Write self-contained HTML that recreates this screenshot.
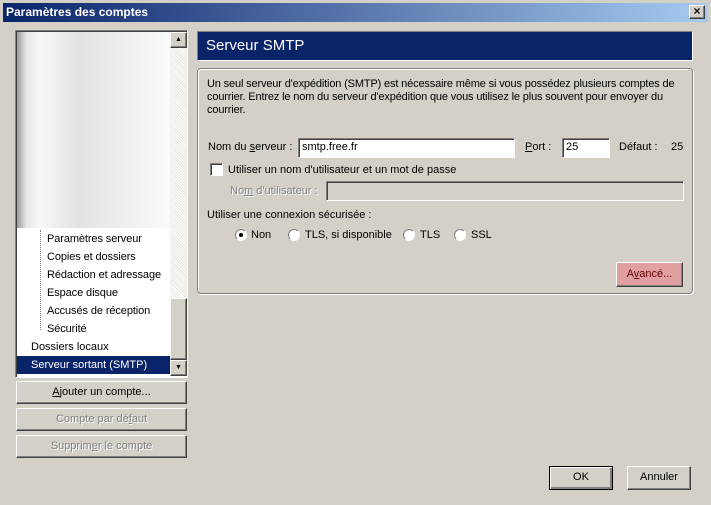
<!DOCTYPE html>
<html><head><meta charset="utf-8"><style>
*{box-sizing:border-box;margin:0;padding:0}
body{width:711px;height:505px;background:#d4d0c8;font-family:"Liberation Sans",sans-serif;font-size:11px;color:#000;position:relative;overflow:hidden}
.a{position:absolute;white-space:nowrap}
.btn{position:absolute;background:#d4d0c8;border:1px solid;border-color:#fff #404040 #404040 #fff;box-shadow:inset -1px -1px 0 #808080;text-align:center}
.inp{position:absolute;background:#fff;border:1px solid;border-color:#808080 #fff #fff #808080;box-shadow:inset 1px 1px 0 #404040;padding:2px 3px}
.dis{color:#808080;text-shadow:1px 1px 0 #fff}
.radio{position:absolute;width:12px;height:12px;border-radius:50%;background:#fff;border:1px solid;border-color:#808080 #fff #fff #808080}
.tree{position:absolute;left:47px;color:#000;letter-spacing:-0.1px}
</style></head><body>
<div class="a" style="left:3px;top:3px;width:705px;height:19px;background:linear-gradient(90deg,#0a246a,#a6caf0)"></div>
<div class="a" style="left:6px;top:5px;color:#fff;font-weight:bold;font-size:12px">Paramètres des comptes</div>
<div class="btn" style="left:689px;top:5px;width:16px;height:14px;font-size:12px;line-height:11px;font-weight:bold">×</div>

<div class="a" style="left:15px;top:30px;width:173px;height:348px;background:#fff;border:1px solid;border-color:#808080 #fff #fff #808080;box-shadow:inset 1px 1px 0 #404040"></div>
<div class="a" style="left:17px;top:32px;width:153px;height:196px;background:linear-gradient(90deg,#999 0,#e6e6e6 6%,#f8f8f8 15%,#e2e2e2 40%,#efefef 70%,#fafafa 100%)"></div>
<div class="a" style="left:170px;top:32px;width:17px;height:344px;background:repeating-linear-gradient(45deg,#e8e6e2 0 1px,#fff 1px 2px)"></div>
<div class="btn" style="left:170px;top:32px;width:17px;height:16px;font-size:7px;line-height:13px">▲</div>
<div class="btn" style="left:170px;top:298px;width:17px;height:62px"></div>
<div class="btn" style="left:170px;top:360px;width:17px;height:16px;font-size:7px;line-height:13px">▼</div>
<div class="a" style="left:40px;top:230px;height:100px;border-left:1px dotted #808080"></div>
<div class="tree a" style="top:233px">Paramètres serveur</div>
<div class="tree a" style="top:251px">Copies et dossiers</div>
<div class="tree a" style="top:269px">Rédaction et adressage</div>
<div class="tree a" style="top:287px">Espace disque</div>
<div class="tree a" style="top:305px">Accusés de réception</div>
<div class="tree a" style="top:323px">Sécurité</div>
<div class="a" style="left:31px;top:341px">Dossiers locaux</div>
<div class="a" style="left:17px;top:356px;width:153px;height:18px;background:#0a246a;color:#fff;padding:3px 0 0 14px">Serveur sortant (SMTP)</div>

<div class="btn" style="left:16px;top:381px;width:171px;height:23px;line-height:20px"><u>A</u>jouter un compte...</div>
<div class="btn dis" style="left:16px;top:408px;width:171px;height:23px;line-height:20px">Compte par dé<u>f</u>aut</div>
<div class="btn dis" style="left:16px;top:435px;width:171px;height:23px;line-height:20px">Supprim<u>e</u>r le compte</div>

<div class="a" style="left:197px;top:31px;width:496px;height:30px;background:#0a246a;border:1px solid;border-color:#808080 #fff #fff #808080;color:#fff;font-size:15px;padding:5px 0 0 8px">Serveur SMTP</div>
<div class="a" style="left:197px;top:68px;width:496px;height:226px;border:1px solid #808080;border-radius:4px;box-shadow:1px 1px 0 #fff,inset 1px 1px 0 #fff"></div>
<div class="a" style="left:207px;top:78px;line-height:13px;white-space:normal;width:484px;letter-spacing:-0.15px">Un seul serveur d'expédition (SMTP) est nécessaire même si vous possédez plusieurs comptes de courrier. Entrez le nom du serveur d'expédition que vous utilisez le plus souvent pour envoyer du courrier.</div>

<div class="a" style="left:208px;top:141px">Nom du <u>s</u>erveur :</div>
<div class="inp" style="left:298px;top:138px;width:217px;height:20px">smtp.free.fr</div>
<div class="a" style="left:525px;top:141px"><u>P</u>ort :</div>
<div class="inp" style="left:562px;top:138px;width:48px;height:20px">25</div>
<div class="a" style="left:619px;top:141px">Défaut :</div>
<div class="a" style="left:671px;top:141px">25</div>

<div class="a" style="left:210px;top:163px;width:13px;height:13px;background:#fff;border:1px solid;border-color:#808080 #fff #fff #808080;box-shadow:inset 1px 1px 0 #404040"></div>
<div class="a" style="left:228px;top:164px">Utiliser un nom d'utilisateur et un mot de passe</div>
<div class="a dis" style="left:230px;top:185px">No<u>m</u> d'utilisateur :</div>
<div class="a" style="left:326px;top:181px;width:358px;height:20px;background:#d4d0c8;border:1px solid;border-color:#808080 #fff #fff #808080;box-shadow:inset 1px 1px 0 #404040"></div>

<div class="a" style="left:207px;top:209px">Utiliser une connexion sécurisée :</div>
<div class="radio" style="left:235px;top:229px"><div style="position:absolute;left:3px;top:3px;width:4px;height:4px;border-radius:50%;background:#000"></div></div>
<div class="a" style="left:251px;top:229px">Non</div>
<div class="radio" style="left:288px;top:229px"></div>
<div class="a" style="left:305px;top:229px">TLS, si disponible</div>
<div class="radio" style="left:403px;top:229px"></div>
<div class="a" style="left:420px;top:229px">TLS</div>
<div class="radio" style="left:454px;top:229px"></div>
<div class="a" style="left:471px;top:229px">SSL</div>

<div class="btn" style="left:616px;top:262px;width:67px;height:25px;line-height:22px;background:#e0a0a0;color:#600">A<u>v</u>ancé...</div>

<div class="btn" style="left:549px;top:466px;width:64px;height:24px;line-height:21px;border-color:#000;box-shadow:inset 1px 1px 0 #fff,inset -2px -2px 0 #808080">OK</div>
<div class="btn" style="left:627px;top:466px;width:64px;height:24px;line-height:21px">Annuler</div>
</body></html>
